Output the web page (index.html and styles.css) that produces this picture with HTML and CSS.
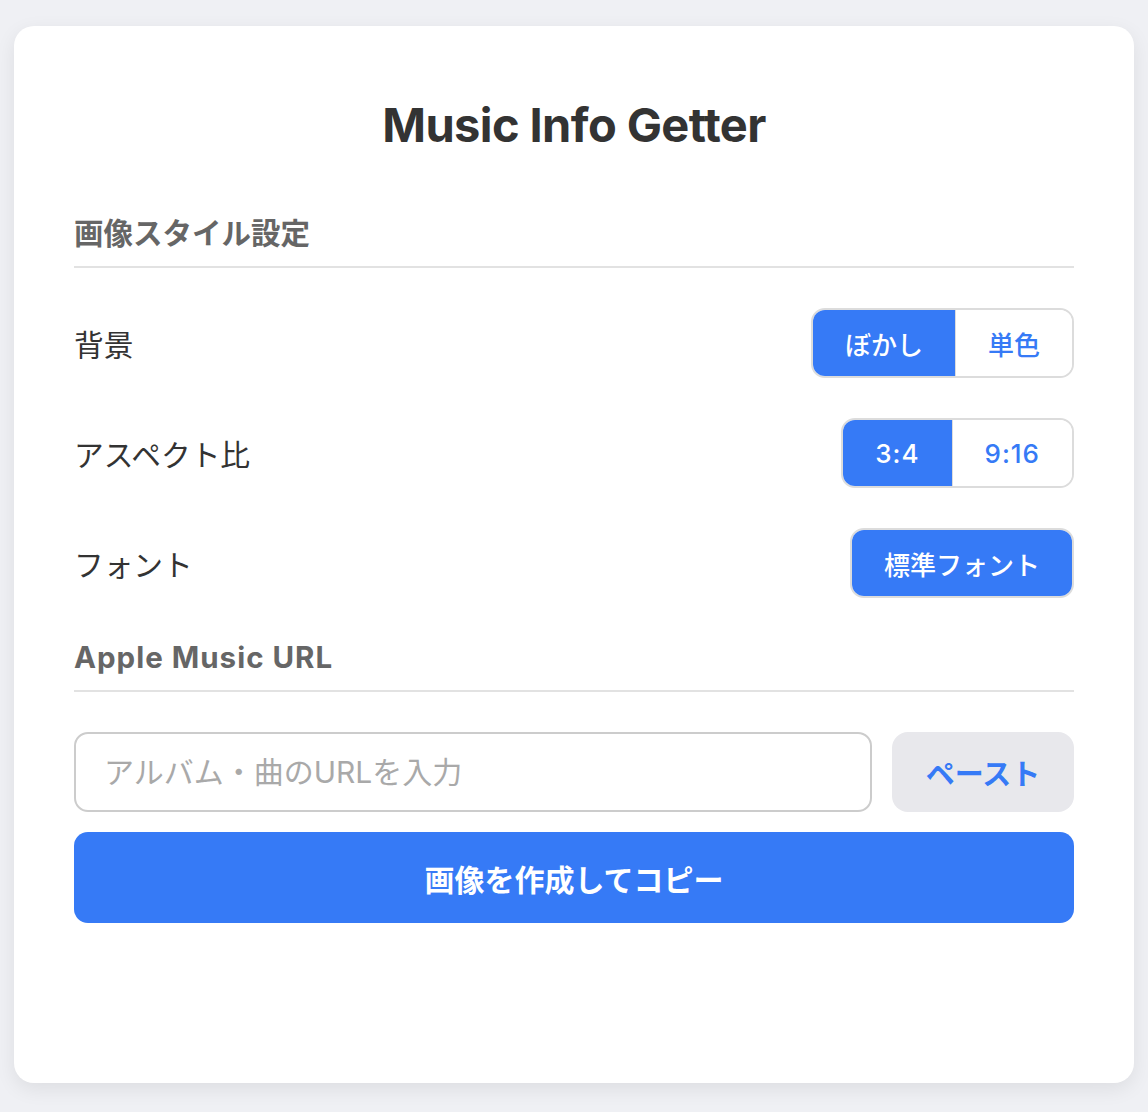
FILE: index.html
```html
<!DOCTYPE html>
<html lang="ja">
<head>
<meta charset="utf-8">
<title>Music Info Getter</title>
<link rel="stylesheet" href="styles.css">
</head>
<body>
<main class="card">
  <h1 class="title">Music Info Getter</h1>

  <section class="section">
    <h2 class="section-title">画像スタイル設定</h2>
    <div class="rows">
      <div class="row">
        <span class="label">背景</span>
        <div class="seg">
          <button class="seg-btn active">ぼかし</button>
          <button class="seg-btn">単色</button>
        </div>
      </div>
      <div class="row">
        <span class="label">アスペクト比</span>
        <div class="seg">
          <button class="seg-btn seg-num active">3:4</button>
          <button class="seg-btn seg-num">9:16</button>
        </div>
      </div>
      <div class="row">
        <span class="label">フォント</span>
        <div class="seg">
          <button class="seg-btn active">標準フォント</button>
        </div>
      </div>
    </div>
  </section>

  <section class="section section-url">
    <h2 class="section-title section-title-latin">Apple Music URL</h2>
    <div class="url-row">
      <input class="url-input" type="text" placeholder="アルバム・曲のURLを入力">
      <button class="paste-btn">ペースト</button>
    </div>
    <button class="create-btn">画像を作成してコピー</button>
  </section>
</main>
</body>
</html>
```

FILE: styles.css
```css
* { box-sizing: border-box; }

html, body {
  margin: 0;
  padding: 0;
}

body {
  background: #eff0f4;
  font-family: Inter, "Noto Sans CJK JP", sans-serif;
  color: #333;
  padding: 26px 14px 29px;
}

.card {
  background: #fff;
  border-radius: 20px;
  box-shadow: 0 6px 20px rgba(0, 0, 0, 0.08);
  padding: 60px 60px;
  height: 1057px;
}

.title {
  margin: 9px 0 58px;
  font-size: 47px;
  line-height: 60px;
  font-weight: 700;
  text-align: center;
  color: #333;
  letter-spacing: -0.6px;
}

.section-title {
  margin: 0;
  font-size: 29.5px;
  line-height: 40px;
  font-weight: 700;
  color: #666;
  padding-bottom: 13px;
  border-bottom: 2px solid #e2e2e2;
}

.section-title-latin {
  letter-spacing: 1px;
}

.rows {
  display: flex;
  flex-direction: column;
  gap: 40px;
  margin-top: 40px;
}

.row {
  display: flex;
  align-items: center;
  justify-content: space-between;
  height: 70px;
}

.label {
  font-size: 29.7px;
  color: #333;
}

.seg {
  display: flex;
  height: 70px;
  border: 2px solid #dcdcdc;
  border-radius: 14px;
  overflow: hidden;
}

.seg-btn {
  border: 0;
  margin: 0;
  background: #fff;
  color: #367af6;
  font-family: Inter, "Noto Sans CJK JP", sans-serif;
  font-size: 26px;
  font-weight: 500;
  padding: 0 32px;
}

.seg-num {
  letter-spacing: 1px;
}

.seg-btn + .seg-btn {
  border-left: 1px solid #dcdcdc;
}

.seg-btn.active {
  background: #367af6;
  color: #fff;
}

.section-url {
  margin-top: 39px;
}

.url-row {
  display: flex;
  gap: 20px;
  margin-top: 40px;
  height: 80px;
}

.url-input {
  flex: 1;
  min-width: 0;
  border: 2px solid #cccccc;
  border-radius: 14px;
  padding: 0 28px;
  font-family: Inter, "Noto Sans CJK JP", sans-serif;
  font-size: 30px;
  color: #333;
  outline: none;
}

.url-input::placeholder {
  color: #a9a9a9;
}

.paste-btn {
  width: 182px;
  border: 0;
  border-radius: 16px;
  background: #e8e8ec;
  color: #367af6;
  font-family: Inter, "Noto Sans CJK JP", sans-serif;
  font-size: 29px;
  font-weight: 700;
}

.create-btn {
  display: block;
  width: 100%;
  height: 91px;
  margin-top: 20px;
  border: 0;
  border-radius: 14px;
  background: #367af6;
  color: #fff;
  font-family: Inter, "Noto Sans CJK JP", sans-serif;
  font-size: 30px;
  font-weight: 700;
}
```
